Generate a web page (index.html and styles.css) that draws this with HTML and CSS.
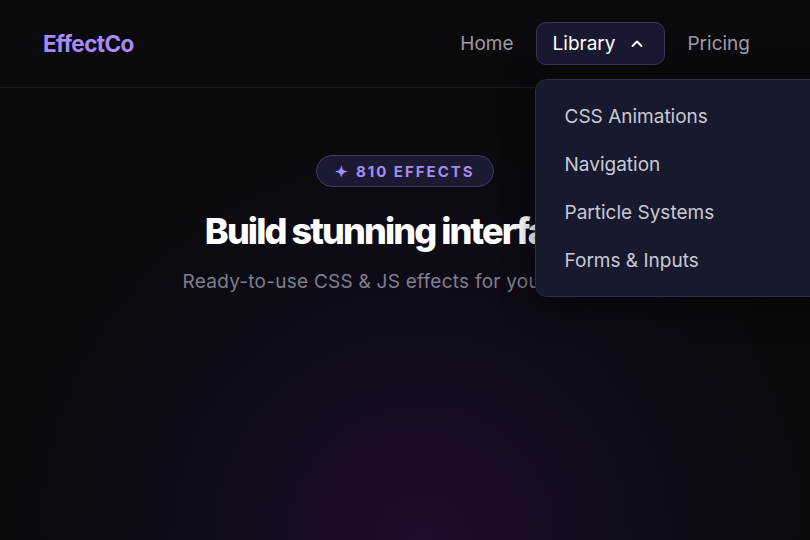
FILE: index.html
```html
<html>
    <head>
        <link rel="stylesheet" href="styles.css">
    </head>
    <body>
        <div class="header">
            <div class="logo">EffectCo</div>
            <div class="nav">
                <a class="nav-link">Home</a>
                <div class="nav-drop">
                    <button class="nav-link active">Library
                        <svg width="16" height="16" viewBox="0 0 16 16"><path d="M3.5 10 L8 5.5 L12.5 10" fill="none" stroke="#fff" stroke-width="2" stroke-linecap="round" stroke-linejoin="round"/></svg>
                    </button>
                    <div class="dropdown">
                        <a class="drop-item">CSS Animations</a>
                        <a class="drop-item">Navigation</a>
                        <a class="drop-item">Particle Systems</a>
                        <a class="drop-item">Forms &amp; Inputs</a>
                    </div>
                </div>
                <a class="nav-link">Pricing</a>
            </div>
        </div>
        <div class="hero">
            <div class="badge">&#10022; 810 EFFECTS</div>
            <h1>Build stunning interfaces</h1>
            <p class="sub">Ready-to-use CSS &amp; JS effects for your projects</p>
        </div>
    </body>
</html>
```

FILE: styles.css
```css
body {
    margin: 0;
    height: 540px;
    overflow: hidden;
    font-family: Inter, "Noto Sans", sans-serif;
    background-color: #0a0a0d;
    background-image: radial-gradient(ellipse 420px 420px at 52% 100%, rgba(60, 14, 80, 0.45), rgba(25, 14, 45, 0.35) 55%, transparent 100%);
    color: #fff;
}

.header {
    display: flex;
    align-items: center;
    justify-content: space-between;
    height: 87px;
    padding: 0 44px 0 43px;
    border-bottom: 1px solid #1b1b24;
}

.logo {
    color: #a78bfa;
    font-size: 22.5px;
    font-weight: 700;
    letter-spacing: -0.6px;
}

.nav {
    display: flex;
    align-items: center;
    gap: 6px;
}

.nav-link {
    display: flex;
    align-items: center;
    height: 43px;
    padding: 0 16px;
    color: #9b9ba8;
    font-size: 19px;
    font-family: inherit;
    box-sizing: border-box;
}

.nav-drop {
    position: relative;
}

.nav-link.active {
    color: #fff;
    background-color: #1a1830;
    border: 1px solid #3a3658;
    border-radius: 10px;
    padding: 0 19px 0 16px;
    gap: 14px;
}

.dropdown {
    position: absolute;
    top: 57px;
    left: -1px;
    width: 300px;
    padding: 12px 0;
    background-color: #171a2d;
    border: 1px solid #2e2e4a;
    border-radius: 12px;
    box-shadow: 0 10px 30px rgba(0, 0, 0, 0.5);
}

.drop-item {
    display: flex;
    align-items: center;
    height: 48px;
    padding-left: 29px;
    color: #c9c9d6;
    font-size: 19px;
}

.hero {
    display: flex;
    flex-direction: column;
    align-items: center;
    padding-top: 67px;
}

.badge {
    height: 30px;
    padding: 0 18px;
    display: flex;
    align-items: center;
    border: 1px solid #3f3a66;
    border-radius: 16px;
    background-color: #1c1a33;
    color: #a58cf5;
    font-size: 15px;
    font-weight: 700;
    letter-spacing: 2px;
}

h1 {
    margin: 22px 0 0;
    font-size: 36px;
    font-weight: 800;
    letter-spacing: -1.9px;
    line-height: 44px;
}

.sub {
    margin: 17px 0 0;
    color: #7f7f8e;
    font-size: 19px;
    letter-spacing: 0.25px;
}
```
